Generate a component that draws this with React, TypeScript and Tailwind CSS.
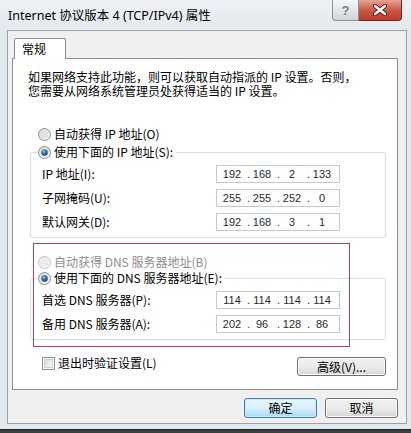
import React from "react";

const CJK = "font-['Noto_Sans_CJK_SC',sans-serif]";

function Radio({ checked, disabled }: { checked?: boolean; disabled?: boolean }) {
  const id = checked ? "rc" : disabled ? "rd" : "rn";
  return (
    <svg width="13" height="13" viewBox="0 0 13 13" className="shrink-0">
      <defs>
        <linearGradient id={id + "o"} x1="0" y1="0" x2="1" y2="1">
          <stop offset="0" stopColor={disabled ? "#e6e6e6" : "#d4d4d4"} />
          <stop offset="1" stopColor="#ffffff" />
        </linearGradient>
        <radialGradient id={id + "i"} cx="0.4" cy="0.35" r="0.7">
          <stop offset="0" stopColor="#8ecbf0" />
          <stop offset="0.5" stopColor="#2a6fa8" />
          <stop offset="1" stopColor="#123e66" />
        </radialGradient>
      </defs>
      <circle cx="6.5" cy="6.5" r="6" fill={`url(#${id}o)`} stroke={disabled ? "#c2c2c2" : "#8e8f8f"} strokeWidth="1" />
      <circle cx="6.5" cy="6.5" r="4" fill={disabled ? "#ececec" : "#e2e2e2"} />
      {checked && <circle cx="6.5" cy="6.5" r="3.2" fill={`url(#${id}i)`} />}
    </svg>
  );
}

function IpBox({ v }: { v: string[] }) {
  return (
    <div className="w-[124px] h-[18px] border border-[#c6c8cc] bg-white flex items-center pl-[3px] text-[11px] text-[#2a2a2a] font-['Liberation_Sans',Arial,sans-serif] leading-none">
      <span className="w-[24px] text-center">{v[0]}</span>
      <span className="w-[6px] text-right">.</span>
      <span className="w-[24px] text-center">{v[1]}</span>
      <span className="w-[6px] text-right">.</span>
      <span className="w-[24px] text-center">{v[2]}</span>
      <span className="w-[6px] text-right">.</span>
      <span className="w-[24px] text-center">{v[3]}</span>
    </div>
  );
}

function Row({ label, v }: { label: string; v: string[] }) {
  return (
    <div className="flex items-center h-[18px]">
      <span className="w-[185px] pl-[11px] text-[12px] leading-none text-black whitespace-nowrap">{label}</span>
      <IpBox v={v} />
    </div>
  );
}

function WinButton({ children, primary, className }: { children: React.ReactNode; primary?: boolean; className?: string }) {
  return (
    <div
      className={
        "flex items-center justify-center rounded-[3px] border text-[12px] leading-none text-black " +
        (primary
          ? "border-[#3c7fb1] bg-gradient-to-b from-[#eaf6fd] via-[#d9f0fc] to-[#a7d9f5] shadow-[inset_0_0_0_1px_#cdeaf9] "
          : "border-[#707070] bg-gradient-to-b from-[#f2f2f2] via-[#ebebeb] to-[#d6d6d6] shadow-[inset_0_0_0_1px_#fbfbfb] ") +
        (className ?? "")
      }
    >
      {children}
    </div>
  );
}

export default function App() {
  return (
    <div className={"w-[411px] h-[433px] bg-[#e3e8ee] flex flex-col overflow-hidden " + CJK}>
      {/* title bar */}
      <div className="h-[30px] flex items-start justify-between bg-gradient-to-b from-[#eef1f4] to-[#e4e9ee]">
        <div className="pl-[8px] pt-[8px] text-[12.5px] leading-[16px] text-black whitespace-nowrap font-['Noto_Sans','Noto_Sans_CJK_SC',sans-serif]">
          Internet 协议版本 4 (TCP/IPv4) 属性
        </div>
        <div className="flex mr-[9px]">
          <div className="w-[27px] h-[21px] border border-[#8a929c] border-t-0 rounded-bl-[4px] bg-gradient-to-b from-[#f4f6f8] via-[#e2e6ea] to-[#cfd5db] flex items-center justify-center text-[13px] font-bold text-[#7b848e] font-['Liberation_Sans',Arial,sans-serif] leading-none">
            ?
          </div>
          <div className="w-[43px] h-[21px] border border-[#6d2a24] border-t-0 border-l-0 rounded-br-[4px] bg-gradient-to-b from-[#e8a493] via-[#c75a46] to-[#c0392b] flex items-center justify-center">
            <svg width="16" height="12" viewBox="0 0 16 12">
              <path d="M3 2 L13 10 M13 2 L3 10" stroke="#5a1d16" strokeWidth="4.2" strokeLinecap="round" />
              <path d="M3 2 L13 10 M13 2 L3 10" stroke="#ffffff" strokeWidth="2.4" strokeLinecap="round" />
            </svg>
          </div>
        </div>
      </div>

      {/* client */}
      <div className="ml-[7px] w-[400px] h-[394px] border border-[#9aa1a9] bg-[#f0f0f0] pl-[4px] pr-[8px] pt-[7px] flex flex-col">
        {/* tab */}
        <div className="flex">
          <div className="ml-[2px] w-[52px] h-[21px] -mb-px relative z-10 bg-white border border-b-0 border-[#898c95] rounded-t-[2px] pl-[7px] flex items-center text-[12px] leading-none text-black">
            常规
          </div>
        </div>
        {/* panel */}
        <div className="h-[332px] border border-[#898c95] bg-white flex flex-col">
          <div className="pl-[15px] pt-[11px] text-[12px] leading-[14px] text-black whitespace-nowrap">
            <div>如果网络支持此功能，则可以获取自动指派的 IP 设置。否则，</div>
            <div>您需要从网络系统管理员处获得适当的 IP 设置。</div>
          </div>

          <div className="mt-[28px] ml-[25px] h-[16px] flex items-center gap-[3px] text-[12px] leading-none text-black">
            <Radio />
            <span>自动获得 IP 地址(O)</span>
          </div>

          <fieldset className="mt-[2px] ml-[17px] w-[356px] border border-[#d5dfe5] rounded-[3px] px-0 pt-[5px] pb-[6px]">
            <legend className="ml-[6px] pl-[1px] pr-[3px] h-[16px] text-[12px] leading-none flex items-center gap-[3px] text-black">
              <Radio checked />
              <span>使用下面的 IP 地址(S):</span>
            </legend>
            <div className="flex flex-col gap-[6px]">
              <Row label="IP 地址(I):" v={["192", "168", "2", "133"]} />
              <Row label="子网掩码(U):" v={["255", "255", "252", "0"]} />
              <Row label="默认网关(D):" v={["192", "168", "3", "1"]} />
            </div>
          </fieldset>

          <div className="relative pt-[16px]">
            <div className="ml-[25px] h-[16px] flex items-center gap-[3px] text-[12px] leading-none text-[#8d8d8d]">
              <Radio disabled />
              <span>自动获得 DNS 服务器地址(B)</span>
            </div>
            <fieldset className="mt-0 ml-[17px] w-[356px] border border-[#d5dfe5] rounded-[3px] px-0 pt-[5px] pb-[6px]">
              <legend className="ml-[6px] pl-[1px] pr-[3px] h-[16px] text-[12px] leading-none flex items-center gap-[3px] text-black">
                <Radio checked />
                <span>使用下面的 DNS 服务器地址(E):</span>
              </legend>
              <div className="flex flex-col gap-[6px]">
                <Row label="首选 DNS 服务器(P):" v={["114", "114", "114", "114"]} />
                <Row label="备用 DNS 服务器(A):" v={["202", "96", "128", "86"]} />
              </div>
            </fieldset>
            <div className="absolute left-[20px] top-[5px] w-[317px] h-[104px] border border-[#c43c4c] pointer-events-none" />
          </div>

          <div className="mt-[16px] flex items-start justify-between">
            <div className="ml-[29px] h-[14px] flex items-center gap-[3px] text-[12px] leading-none text-black">
              <svg width="13" height="13" viewBox="0 0 13 13" className="shrink-0">
                <defs>
                  <linearGradient id="cbg" x1="0" y1="0" x2="1" y2="1">
                    <stop offset="0" stopColor="#dcdcdc" />
                    <stop offset="1" stopColor="#f8f8f8" />
                  </linearGradient>
                </defs>
                <rect x="0.5" y="0.5" width="12" height="12" fill="#fff" stroke="#8e8f8f" />
                <rect x="2.5" y="2.5" width="8" height="8" fill="url(#cbg)" stroke="#c4c4c4" strokeWidth="0.8" />
              </svg>
              <span>退出时验证设置(L)</span>
            </div>
            <WinButton className="mt-[1px] mr-[11px] w-[89px] h-[19px]">高级(V)...</WinButton>
          </div>
        </div>

        <div className="mt-[8px] flex justify-end gap-[8px]">
          <WinButton primary className="w-[73px] h-[20px]">确定</WinButton>
          <WinButton className="w-[73px] h-[20px]">取消</WinButton>
        </div>
      </div>

      <div className="h-[5px]" />
      <div className="h-[4px] bg-[#3a3d41] border-t border-[#202225]" />
    </div>
  );
}
